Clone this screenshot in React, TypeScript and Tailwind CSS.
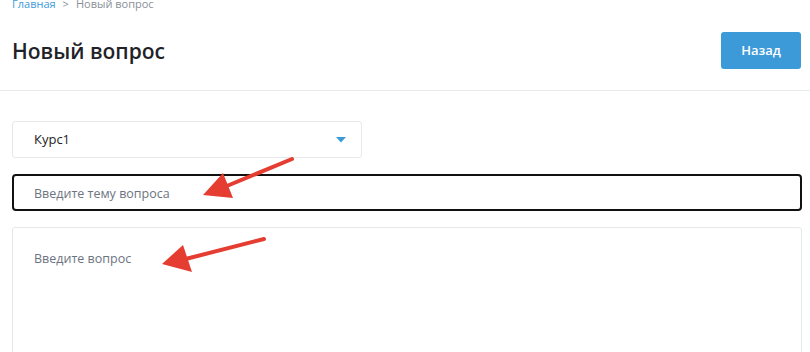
import React from "react";

function Arrow({ tail, tip, left, right }: { tail: [number, number]; tip: [number, number]; left: [number, number]; right: [number, number] }) {
  // stop the shaft inside the head so the tip stays sharp
  const mx = (left[0] + right[0]) / 2;
  const my = (left[1] + right[1]) / 2;
  return (
    <g>
      <line x1={tail[0]} y1={tail[1]} x2={mx} y2={my} stroke="#e53d31" strokeWidth={4} strokeLinecap="round" />
      <polygon points={`${tip[0]},${tip[1]} ${left[0]},${left[1]} ${right[0]},${right[1]}`} fill="#e53d31" />
    </g>
  );
}

export default function App() {
  return (
    <div className="relative w-[810px] h-[352px] overflow-hidden bg-white" style={{ fontFamily: "'Open Sans', 'Noto Sans', sans-serif" }}>
      <div className="pl-3 pr-2">
        <div className="-mt-[4px] text-[11px] leading-[16px] text-[#8a8f98]">
          <span className="text-[#3d9ad9]">Главная</span>
          <span className="mx-[7px]">&gt;</span>
          <span>Новый вопрос</span>
        </div>
      </div>
      <div className="flex items-center justify-between pl-3 pr-[9px] pt-[20px] pb-[21px] border-b border-[#e8eaee]">
        <h1 className="text-[21px] font-semibold text-[#1f2328] leading-[28px]">Новый вопрос</h1>
        <button className="w-[80px] h-[37px] rounded-[3px] bg-[#3d9ad9] text-white text-[13px] font-semibold">Назад</button>
      </div>
      <div className="pl-3 pr-2 pt-[30px] flex flex-col gap-[16px]">
        <div className="w-[350px] h-[37px] flex items-center justify-between pl-[21px] pr-[15px] border border-[#e6e8ec] rounded-[3px] text-[13px] text-[#222]">
          <span>Курс1</span>
          <svg width="10" height="6" viewBox="0 0 10 6">
            <polygon points="0,0 10,0 5,5.5" fill="#3d9ad9" />
          </svg>
        </div>
        <div className="h-[37px] flex items-center pl-[20px] pt-[3px] border-2 border-[#111] rounded-[4px] text-[12.5px] text-[#6c7480]">
          Введите тему вопроса
        </div>
        <div className="h-[140px] pl-[21px] pt-[22px] border border-[#e6e8ec] rounded-[3px] text-[12.5px] text-[#6c7480]">
          Введите вопрос
        </div>
      </div>
      <svg className="absolute left-0 top-0 pointer-events-none" width="810" height="352">
        <Arrow tail={[292, 159]} tip={[203, 195]} left={[223, 173]} right={[233, 198]} />
        <Arrow tail={[264, 239]} tip={[162, 264]} left={[183, 245]} right={[192, 272]} />
      </svg>
    </div>
  );
}
